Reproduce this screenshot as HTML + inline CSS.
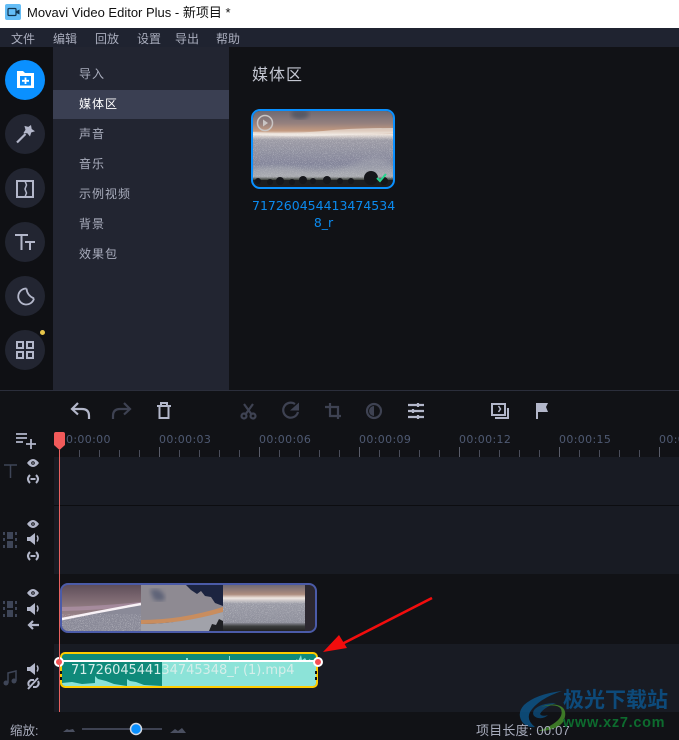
<!DOCTYPE html>
<html><head><meta charset="utf-8"><style>
*{margin:0;padding:0;box-sizing:border-box}
html,body{width:679px;height:740px;overflow:hidden;background:#111216}
body{position:relative;font-family:"Liberation Sans","Noto Sans CJK SC",sans-serif}
.a{position:absolute;white-space:nowrap}
.m{top:31px;font-size:12px;line-height:16px;color:#a9adbd}
.s{left:79px;font-size:12px;line-height:16px;color:#a9adbd;letter-spacing:1px}
.c{left:5px;width:40px;height:40px;border-radius:50%;background:#222531}
.t{top:433px;font:11px/14px "DejaVu Sans",sans-serif;color:#4f5a73;letter-spacing:.35px}
svg{position:absolute;left:0;top:0}
</style></head><body>
<div class="a" style="left:0;top:0;width:679px;height:28px;background:#fff"></div>
<div class="a" style="left:27px;top:4px;font-size:13px;line-height:18px;color:#111">Movavi Video Editor Plus - 新项目 *</div>
<div class="a" style="left:0;top:28px;width:679px;height:19px;background:#1f2330"></div>
<div class="a m" style="left:11px">文件</div><div class="a m" style="left:53px">编辑</div><div class="a m" style="left:95px">回放</div><div class="a m" style="left:137px">设置</div><div class="a m" style="left:175px">导出</div><div class="a m" style="left:216px">帮助</div>
<div class="a" style="left:0;top:47px;width:53px;height:343px;background:#0f1014"></div>
<div class="a" style="left:53px;top:47px;width:176px;height:343px;background:#222531"></div>
<div class="a" style="left:53px;top:90px;width:176px;height:29px;background:#3a3f52"></div>
<div class="a s" style="top:66px">导入</div><div class="a s" style="top:96px;color:#fff">媒体区</div><div class="a s" style="top:126px">声音</div><div class="a s" style="top:156px">音乐</div><div class="a s" style="top:186px">示例视频</div><div class="a s" style="top:216px">背景</div><div class="a s" style="top:246px">效果包</div>
<div class="a c" style="top:60px;background:#0a90ff"></div><div class="a c" style="top:114px"></div><div class="a c" style="top:168px"></div><div class="a c" style="top:222px"></div><div class="a c" style="top:276px"></div><div class="a c" style="top:330px"></div>
<div class="a" style="left:252px;top:65px;font-size:16px;line-height:22px;color:#c4c7d2;letter-spacing:1px">媒体区</div>
<div class="a" style="left:0;top:390px;width:679px;height:1px;background:#2b2e3b"></div>
<div class="a" style="left:54px;top:457px;width:625px;height:48px;background:#181b23"></div>
<div class="a" style="left:54px;top:506px;width:625px;height:68px;background:#181b23"></div>
<div class="a" style="left:54px;top:644px;width:625px;height:68px;background:#181b23"></div>
<div class="a t" style="left:66px">0:00:00</div><div class="a t" style="left:159px">00:00:03</div><div class="a t" style="left:259px">00:00:06</div><div class="a t" style="left:359px">00:00:09</div><div class="a t" style="left:459px">00:00:12</div><div class="a t" style="left:559px">00:00:15</div><div class="a t" style="left:659px">00:00:18</div>

<svg width="679" height="740" viewBox="0 0 679 740" fill="none">
<defs>
<linearGradient id="sky" x1="0" y1="0" x2="0" y2="1"><stop offset="0" stop-color="#6f6a72"/><stop offset=".16" stop-color="#94807e"/><stop offset=".26" stop-color="#c39a80"/><stop offset=".31" stop-color="#ece2da"/><stop offset=".38" stop-color="#9d9ca6"/><stop offset=".7" stop-color="#83859a"/><stop offset=".86" stop-color="#a6a8ae"/><stop offset=".9" stop-color="#41453f"/><stop offset="1" stop-color="#1c1d20"/></linearGradient>
<linearGradient id="t1" x1="0" y1="0" x2="0" y2="1"><stop offset="0" stop-color="#5d4c58"/><stop offset=".5" stop-color="#8f7a80"/><stop offset="1" stop-color="#a28c92"/></linearGradient>
<linearGradient id="t3" x1="0" y1="0" x2="0" y2="1"><stop offset="0" stop-color="#6b6670"/><stop offset=".22" stop-color="#ad8d7f"/><stop offset=".3" stop-color="#f0e8e2"/><stop offset=".42" stop-color="#9a9ba6"/><stop offset=".82" stop-color="#8f909c"/><stop offset=".9" stop-color="#3a3c3c"/><stop offset="1" stop-color="#222"/></linearGradient>
<clipPath id="vc"><rect x="62" y="584" width="253" height="47" rx="6"/></clipPath>
<clipPath id="tc"><rect x="253" y="111" width="140" height="76" rx="7"/></clipPath>
<clipPath id="ac"><rect x="62" y="654" width="254" height="32" rx="3"/></clipPath>
<filter id="sp" x="0" y="0" width="100%" height="100%"><feTurbulence type="fractalNoise" baseFrequency="1.3" numOctaves="1" seed="4"/><feColorMatrix values="0 0 0 0 1  0 0 0 0 1  0 0 0 0 1  4 0 0 0 -2.1"/></filter>
<filter id="bl"><feGaussianBlur stdDeviation="2"/></filter>
</defs>

<!-- title icon -->
<rect x="5" y="4" width="16" height="16" rx="2" fill="#64bdf6"/><rect x="8" y="8.500" width="8" height="7" rx="1" stroke="#10344f" stroke-width="1.200"/><path d="M16.500 11l3-1.500v5l-3-1.500z" fill="#10344f"/>

<!-- rail icons -->
<path d="M17 88V71h6l2 2h9v15z" fill="#fff"/><rect x="20" y="76" width="11" height="9.500" fill="#0a90ff"/><path d="M25.500 77.500v6.500M22 80.800h7" stroke="#fff" stroke-width="1.800"/>
<path d="M31 125l.7 4 3.300 2.300-3.800 1.200-1.200 4-2.700-3.200-4-.1 2.200-3.400-1.100-3.900 3.900 1z" fill="#b3b7ca"/><path d="M25.500 134L17 142.500" stroke="#b3b7ca" stroke-width="2.200"/>
<path d="M17 181h16v16H17z" stroke="#b3b7ca" stroke-width="2"/><path d="M25 181l1.500 4-1.500 4 1.500 4-1.500 4" stroke="#b3b7ca" stroke-width="1.500"/>
<path d="M15 235h13M21.500 235v15" stroke="#b3b7ca" stroke-width="2"/><path d="M25 242h10M30 242v8" stroke="#b3b7ca" stroke-width="2"/>
<path d="M26.500 288.500a8 8 0 1 0 7.500 10" stroke="#b3b7ca" stroke-width="1.800"/><path d="M26.500 288.500c.3 4.500 3 8 7.500 10" stroke="#b3b7ca" stroke-width="1.800"/>
<g stroke="#b3b7ca" stroke-width="2"><rect x="17" y="342" width="6" height="6"/><rect x="27" y="342" width="6" height="6"/><rect x="17" y="352" width="6" height="6"/><rect x="27" y="352" width="6" height="6"/></g>
<circle cx="42.500" cy="332.500" r="2.500" fill="#e8c64a"/>

<!-- media thumb -->
<g clip-path="url(#tc)">
<rect x="253" y="111" width="140" height="76" fill="url(#sky)"/>
<ellipse cx="300" cy="114" rx="9" ry="5" fill="#565964" filter="url(#bl)"/>
<path d="M253 132q40 2 70-1t70-3v5q-40 2-70 3t-70-1z" fill="#f2ece8" opacity=".6"/>
<rect x="253" y="134" width="140" height="44" filter="url(#sp)" opacity=".4"/>
<path d="M253 168q30-5 50 2t50-6 40 2v12H253z" fill="#b4b6ba" opacity=".35" filter="url(#bl)"/>
<path d="M253 180h140v8H253z" fill="#1c1d20"/>
<g fill="#15161a"><circle cx="258" cy="181" r="3"/><circle cx="270" cy="182" r="3"/><circle cx="280" cy="181" r="4"/><circle cx="292" cy="182" r="3"/><circle cx="303" cy="180" r="4"/><circle cx="313" cy="181" r="3"/><circle cx="327" cy="180" r="4"/><circle cx="340" cy="181" r="3"/><circle cx="351" cy="181" r="3"/><circle cx="371" cy="178" r="7"/><circle cx="384" cy="181" r="4"/></g>
</g>
<rect x="252" y="110" width="142" height="78" rx="8" stroke="#0a90ff" stroke-width="2"/>
<path d="M377 178l3 3 6-7" stroke="#27d58e" stroke-width="2"/>
<circle cx="265" cy="123" r="7.500" stroke="#c9c5c4" stroke-width="1.500"/><path d="M263 119.500l5 3.500-5 3.500z" fill="#c9c5c4"/>

<!-- toolbar -->
<g stroke="#b3b7ca" stroke-width="2.200"><path d="M89 419v-3q0-7-7-7H72"/><path d="M78 403l-6 6 6 5.500"/></g>
<g stroke="#3e4252" stroke-width="2.200"><path d="M113 419v-3q0-7 7-7h10"/><path d="M124 403l6 6-6 5.500"/></g>
<path d="M157 406h14M161 405.500v-2.500h6v2.500M159.500 406v12h9v-12" stroke="#b3b7ca" stroke-width="2"/>
<g stroke="#3e4252" stroke-width="2.200"><path d="M244 404l8 11M253 404l-8 11"/><circle cx="244" cy="416" r="2.500"/><circle cx="253" cy="416" r="2.500"/></g>
<path d="M295 404a7.500 7.500 0 1 0 3 8" stroke="#3e4252" stroke-width="2.200"/><path d="M290 410.500h9v-8z" fill="#3e4252"/>
<path d="M330 403v13h11M325 407h13v12" stroke="#3e4252" stroke-width="2.200"/>
<circle cx="374" cy="411" r="7" stroke="#3e4252" stroke-width="2.200"/><path d="M374 406a5 5 0 0 0 0 10z" fill="#3e4252"/>
<g stroke="#b3b7ca" stroke-width="2.200"><path d="M408 405h16M408 411h16M408 417h16"/><path d="M418 403v4M413 409v4M418 415v4"/></g>
<path d="M492 404h13v11h-13z" stroke="#b3b7ca" stroke-width="2"/><path d="M498.500 406l2 3-2 3" stroke="#b3b7ca" stroke-width="1.500"/><path d="M508 408v10h-13" stroke="#b3b7ca" stroke-width="2"/>
<path d="M536 403h12l-2 4 2 5h-10v7h-2z" fill="#b3b7ca"/>

<!-- add track -->
<path d="M16 434h11M16 438h11M16 442h7M26 444h10M31 439v10" stroke="#b3b7ca" stroke-width="1.800"/>

<!-- ruler ticks -->
<path stroke="#4a4d5a" d="M79.500 450v7M99.500 450v7M119.500 450v7M139.500 450v7M179.500 450v7M199.500 450v7M219.500 450v7M239.500 450v7M279.500 450v7M299.500 450v7M319.500 450v7M339.500 450v7M379.500 450v7M399.500 450v7M419.500 450v7M439.500 450v7M479.500 450v7M499.500 450v7M519.500 450v7M539.500 450v7M579.500 450v7M599.500 450v7M619.500 450v7M639.500 450v7"/>
<path stroke="#5a5d6a" d="M159.500 447v10M259.500 447v10M359.500 447v10M459.500 447v10M559.500 447v10M659.500 447v10"/>
<path d="M54 505.500h625" stroke="#0c0d10"/>

<!-- side icons -->
<path d="M4 465h13M10.500 465v13" stroke="#3e4557" stroke-width="1.500"/>
<g fill="#b3b7ca">
<path d="M27 463q6-8 12 0q-6 8-12 0z"/><circle cx="33" cy="463" r="1.800" fill="#111216"/><circle cx="33" cy="463" r=".8"/>
<path d="M27 524q6-8 12 0q-6 8-12 0z"/><circle cx="33" cy="524" r="1.800" fill="#111216"/><circle cx="33" cy="524" r=".8"/>
<path d="M27 593q6-8 12 0q-6 8-12 0z"/><circle cx="33" cy="593" r="1.800" fill="#111216"/><circle cx="33" cy="593" r=".8"/>
<path d="M27 537h3l5-4v12l-5-4h-3z"/><path d="M27 607h3l5-4v12l-5-4h-3z"/><path d="M27 667h3l5-4v12l-5-4h-3z"/>
</g>
<g stroke="#b3b7ca" stroke-width="2">
<path d="M30 475q-4 4 0 8M36 475q4 4 0 8M30.500 479h5"/>
<path d="M30 552q-4 4 0 8M36 552q4 4 0 8M30.500 556h5"/>
<path d="M39 625H29M33 621l-4 4 4 4" stroke-width="2.200"/>
<path d="M29 686q-2-4 2-6h3M38 681q2 4-2 6h-3M28 689l10-11"/>
<path d="M37 535.500q2 3 0 6M37 605.500q2 3 0 6M37 665.500q2 3 0 6" stroke-width="1.500"/>
</g>
<g fill="#3e4557"><rect x="7" y="532" width="6" height="7"/><rect x="7" y="541" width="6" height="7"/><rect x="3" y="532" width="2" height="3"/><rect x="3" y="538" width="2" height="3"/><rect x="3" y="545" width="2" height="3"/><rect x="15" y="532" width="2" height="3"/><rect x="15" y="538" width="2" height="3"/><rect x="15" y="545" width="2" height="3"/>
<rect x="7" y="601" width="6" height="7"/><rect x="7" y="610" width="6" height="7"/><rect x="3" y="601" width="2" height="3"/><rect x="3" y="607" width="2" height="3"/><rect x="3" y="614" width="2" height="3"/><rect x="15" y="601" width="2" height="3"/><rect x="15" y="607" width="2" height="3"/><rect x="15" y="614" width="2" height="3"/>
<circle cx="6" cy="683" r="2.500"/><circle cx="14" cy="681" r="2.500"/></g>
<path d="M8 683v-10l8-2v10" stroke="#3e4557" stroke-width="1.500"/>

<!-- video clip -->
<g clip-path="url(#vc)">
<rect x="62" y="584" width="79" height="47" fill="url(#t1)"/>
<path d="M62 609q40-1 79-5" stroke="#c9a6c8" stroke-width="4" opacity=".4"/>
<path d="M62 620q40-8 79-15v26H62z" fill="#8a8a98"/>
<rect x="62" y="614" width="79" height="17" filter="url(#sp)" opacity=".5"/>
<path d="M62 619q40-8 79-15" stroke="#f8f2f6" stroke-width="2.500"/>
<rect x="141" y="584" width="82" height="47" fill="#1c2440"/>
<path d="M141 584h44l6 6 6 4 4-3 4 5 6 1 4 6 8 3v16h-82z" fill="#8e8a92"/>
<path d="M150 590q10-3 14 5t-10 5z" fill="#5e6478" filter="url(#bl)"/>
<path d="M141 620q40 0 82-13v5q-40 12-82 12z" fill="#c98d5e"/>
<path d="M141 624q40 0 82-12v19h-82z" fill="#a1a2aa"/>
<path d="M209 631l3-7 4 1 3-6 4 2v10z" fill="#1f2024"/>
<rect x="223" y="584" width="82" height="47" fill="url(#t3)"/>
<rect x="223" y="601" width="82" height="22" filter="url(#sp)" opacity=".4"/>
<rect x="305" y="584" width="11" height="47" fill="#2c2830"/>
</g>
<rect x="61" y="584" width="255" height="48" rx="7" stroke="#4b5ba8" stroke-width="2"/>

<!-- audio clip -->
<rect x="60.500" y="653" width="257" height="34" rx="4" fill="#0f8a7a"/>
<g clip-path="url(#ac)">
<path d="M162 686v-24h133v24zM295 686v-25l2-2 1 2 3-6 1 5 3-2 2 3 3-2 1 3 6-1v25z" fill="#8ce3d8"/>
<path d="M162 663v-3h1v3zM186 663v-5h2v5zM229 663v-7h1v7zM235 663v-3h1v3z" fill="#8ce3d8"/>
<path d="M62 686v-3l10-1 10 2 13-1v-7l3 3 8 2 8 3 13 2v-7l3 2 6 1 8 3 18 1z" fill="#8ce3d8"/>
</g>
<rect x="61" y="653" width="256" height="34" rx="4" stroke="#ffcc00" stroke-width="2"/>
<path d="M61 661h256" stroke="#fff" stroke-width="2"/>
<path d="M61 671v3M61 677v3M316 671v3M316 677v3" stroke="#111" stroke-width="2"/>
<circle cx="59" cy="662" r="4" fill="#f44e52" stroke="#fff" stroke-width="2"/><circle cx="318" cy="662" r="4" fill="#f44e52" stroke="#fff" stroke-width="2"/>

<!-- playhead -->
<path d="M59.500 450v262" stroke="#e8615f"/>
<path d="M54 434q0-2 2-2h7q2 0 2 2v11l-5.500 5-5.500-5z" fill="#f25a5a"/>

<!-- arrow -->
<path d="M432 598L340 645" stroke="#f20d0d" stroke-width="2.600"/><path d="M323 652l24-4-8-13z" fill="#f20d0d"/>

<!-- zoom -->
<path d="M63 732l4-3 2 1 4-1 2 3z" fill="#4a4f60"/><path d="M170 733l5-4 3 2 4-3 4 5z" fill="#4a4f60"/>
<path d="M82 729h80" stroke="#3e4252" stroke-width="2"/>
<circle cx="136" cy="729" r="5.500" fill="#0a90ff" stroke="#d5d8e0" stroke-width="1.500"/>

<!-- watermark -->
<g opacity=".75">
<path d="M562 691q-26 3-38 14-8 9-1 18 5 5 12 4-9-7-5-15 8-13 32-21z" fill="#0b5a92"/>
<path d="M556 703q-16 0-22 7-3 6 4 8 6 1 10-3-6 2-8-1 3-6 16-11z" fill="#0b4f80"/>
<path d="M541 707q16-4 20 2 3 8-8 15-6 4-15 7 18 0 25-9 5-10-1-15-8-5-21 0z" fill="#4b9a2c"/>
</g>
</svg>

<div class="a" style="left:252px;top:197px;width:143px;text-align:center;font:12.500px/17px 'DejaVu Sans',sans-serif;color:#0b8aee">717260454413474534<br>8_r</div>
<div class="a" style="left:71px;top:663px;font:13px/16px 'DejaVu Sans',sans-serif;color:#d5eeea;letter-spacing:-.05px">7172604544134745348_r (1).mp4</div>
<div class="a" style="left:10px;top:723px;font-size:12.500px;line-height:16px;color:#a9adbd">缩放:</div>
<div class="a" style="left:476px;top:723px;font-size:13px;line-height:16px;color:#a9adbd;letter-spacing:.2px">项目长度: 00:07</div>
<div class="a" style="left:563px;top:689px;font-size:21px;line-height:24px;font-weight:bold;color:#0d4a7a">极光下载站</div>
<div class="a" style="left:563px;top:715px;font-size:14.500px;line-height:17px;font-weight:bold;color:#0d6b2e;letter-spacing:.7px">www.xz7.com</div>
</body></html>
